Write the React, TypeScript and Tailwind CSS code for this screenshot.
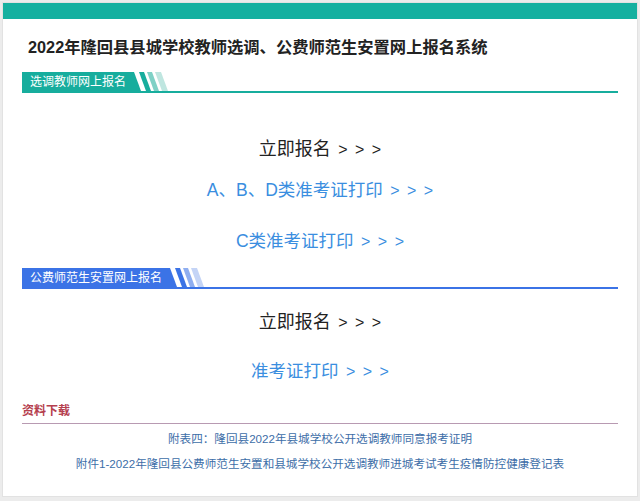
import React from 'react';

const font = { fontFamily: '"Liberation Sans", "Noto Sans CJK SC", sans-serif' };

function SectionHeader({ title, color, light1, light2 }: { title: string; color: string; light1: string; light2: string }) {
    return (
        <div className="flex items-end mx-[19px] border-b-2" style={{ borderColor: color }}>
            <div className="h-[19px] pl-2 pr-1 flex items-center text-[12px] text-white leading-none" style={{ backgroundColor: color }}>
                {title}
            </div>
            <svg width="48" height="19" viewBox="0 0 48 19" className="block">
                <polygon points="0,0 4,0 11,19 0,19" fill={color} />
                <polygon points="9,0 14,0 21,19 16,19" fill={color} />
                <polygon points="17,0 22,0 29,19 24,19" fill={light1} />
                <polygon points="25,0 31,0 38,19 32,19" fill={light2} />
            </svg>
        </div>
    );
}

const Arrows = () => <span className="text-[16px] [word-spacing:3px]">&nbsp;&gt; &gt; &gt;</span>;

export default function App() {
    return (
        <div className="w-[640px] h-[501px] bg-[#ececec] p-[2px] pb-[4px]" style={font}>
            <div className="h-full bg-white border border-[#e2e2e2] flex flex-col">
                <div className="h-[16px] bg-[#15b0a0]" />

                <h1 className="mt-[17px] ml-[25px] text-[16.3px] font-bold text-[#222] leading-[22px]">
                    2022年隆回县县城学校教师选调、公费师范生安置网上报名系统
                </h1>

                <div className="mt-[14px]">
                    <SectionHeader title="选调教师网上报名" color="#17ad9d" light1="#7fd1c6" light2="#bfe6e0" />
                </div>

                <div className="flex flex-col items-center">
                    <a className="mt-[44px] text-[18px] text-[#222] leading-[24px]">立即报名<Arrows /></a>
                    <a className="mt-[16px] text-[17.5px] text-[#3a8ee0] leading-[24px]">A、B、D类准考证打印<Arrows /></a>
                    <a className="mt-[26px] text-[17.5px] text-[#3a8ee0] leading-[24px]">C类准考证打印<Arrows /></a>
                </div>

                <div className="mt-[14px]">
                    <SectionHeader title="公费师范生安置网上报名" color="#3b73e6" light1="#8faef0" light2="#c4d4f6" />
                </div>

                <div className="flex flex-col items-center">
                    <a className="mt-[21px] text-[18px] text-[#222] leading-[24px]">立即报名<Arrows /></a>
                    <a className="mt-[24px] text-[17.5px] text-[#3a8ee0] leading-[24px]">准考证打印<Arrows /></a>
                </div>

                <div className="mt-[14px] mx-[19px] border-b border-[#b89ab2] pb-[1px]">
                    <span className="text-[12px] font-bold text-[#b5404e] leading-[16px]">资料下载</span>
                </div>

                <div className="flex flex-col items-center text-[11.6px] text-[#3d6ea8] leading-[16px]">
                    <a className="mt-[7px]">附表四：隆回县2022年县城学校公开选调教师同意报考证明</a>
                    <a className="mt-[9px]">附件1-2022年隆回县公费师范生安置和县城学校公开选调教师进城考试考生疫情防控健康登记表</a>
                </div>
            </div>
        </div>
    );
}
